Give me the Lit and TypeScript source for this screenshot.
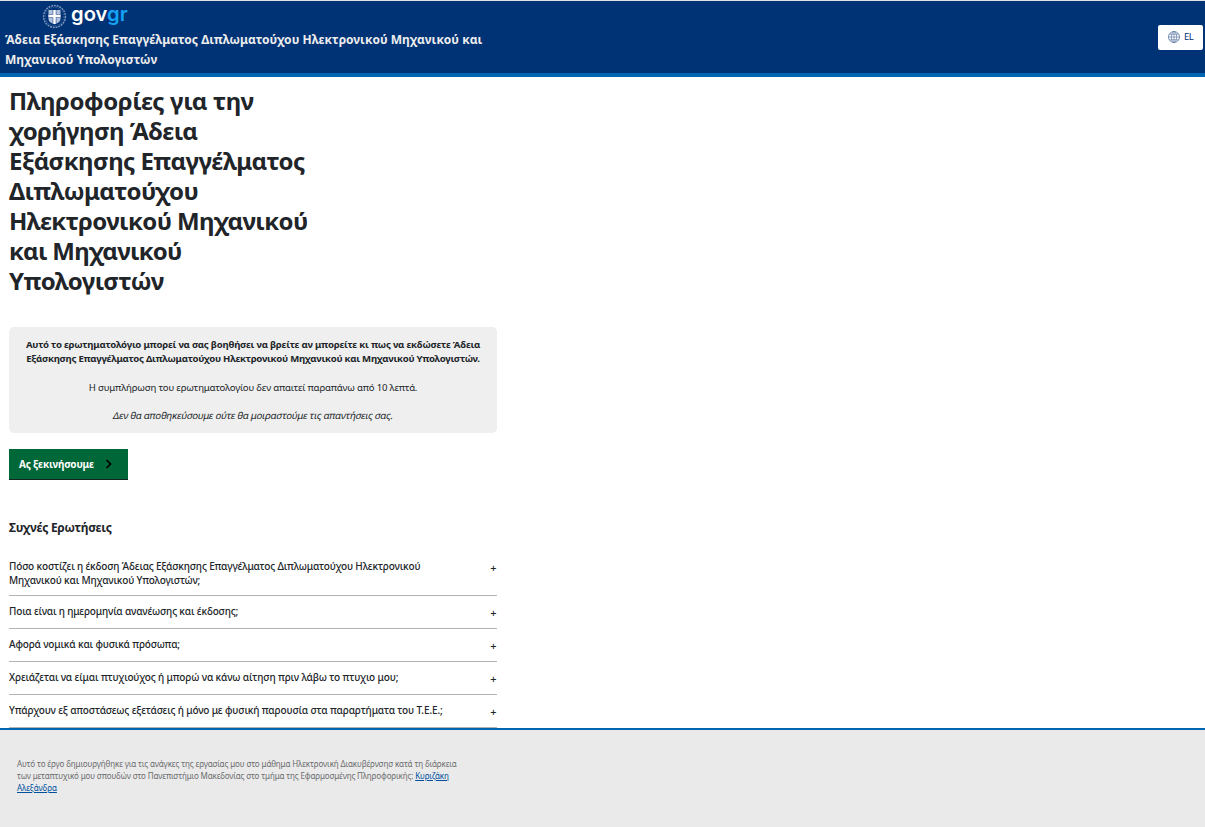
import { LitElement, html, css } from "lit";
import { customElement } from "lit/decorators.js";

// A line of copy with its tracking in px.
type Line = [text: string, tracking: number];

const SERVICE: Line[] = [
  ["Άδεια Εξάσκησης Επαγγέλματος Διπλωματούχου Ηλεκτρονικού Μηχανικού και", 0.02],
  ["Μηχανικού Υπολογιστών", 0.04],
];
const TITLE: Line[] = [
  ["Πληροφορίες για την", -0.42],
  ["χορήγηση Άδεια", -0.56],
  ["Εξάσκησης Επαγγέλματος", -0.56],
  ["Διπλωματούχου", -0.5],
  ["Ηλεκτρονικού Μηχανικού", -0.62],
  ["και Μηχανικού", -0.78],
  ["Υπολογιστών", -0.5],
];
const INTRO: Line[] = [
  ["Αυτό το ερωτηματολόγιο μπορεί να σας βοηθήσει να βρείτε αν μπορείτε κι πως να εκδώσετε Άδεια", -0.205],
  ["Εξάσκησης Επαγγέλματος Διπλωματούχου Ηλεκτρονικού Μηχανικού και Μηχανικού Υπολογιστών.", -0.255],
];
const FAQ: Line[][] = [
  [
    ["Πόσο κοστίζει η έκδοση Άδειας Εξάσκησης Επαγγέλματος Διπλωματούχου Ηλεκτρονικού", -0.153],
    ["Μηχανικού και Μηχανικού Υπολογιστών;", -0.15],
  ],
  [["Ποια είναι η ημερομηνία ανανέωσης και έκδοσης;", -0.155]],
  [["Αφορά νομικά και φυσικά πρόσωπα;", -0.15]],
  [["Χρειάζεται να είμαι πτυχιούχος ή μπορώ να κάνω αίτηση πριν λάβω το πτυχιο μου;", -0.12]],
  [["Υπάρχουν εξ αποστάσεως εξετάσεις ή μόνο με φυσική παρουσία στα παραρτήματα του Τ.Ε.Ε.;", -0.13]],
];

const lines = (items: Line[]) =>
  items.map(([text, tracking]) => html`<span class="line" style="letter-spacing:${tracking}px">${text}</span>`);

@customElement("app-root")
export class AppRoot extends LitElement {
  static styles = css`
    :host {
      display: flex;
      flex-direction: column;
      height: 827px;
      overflow: hidden;
      background: #fff;
      color: #212529;
      font-family: "Noto Sans", sans-serif;
    }
    .line { display: block; white-space: nowrap; }
    h1, h2, p { margin: 0; }
    header {
      box-sizing: border-box;
      flex: none;
      height: 77px;
      display: flex;
      justify-content: space-between;
      align-items: flex-start;
      padding: 0 2px 0 5px;
      background: #003375;
      border-top: 1px solid #dfe3e6;
      border-bottom: 4px solid #0065b3;
    }
    .logo { display: flex; align-items: center; height: 29px; padding-left: 37px; gap: 4px; }
    .logo svg { display: block; margin-top: 1px; }
    .word { font: 600 20.2px/24px Inter, sans-serif; color: #fff; margin-top: -3px; }
    .word b { font-weight: 600; color: #14a3f5; }
    .service { font-weight: 700; font-size: 12px; line-height: 20px; color: #ededed; }
    .lang {
      display: flex;
      align-items: center;
      box-sizing: border-box;
      width: 45px;
      height: 25px;
      margin-top: 24px;
      padding: 0 0 2px 10px;
      gap: 4px;
      border: 0;
      border-radius: 2px;
      background: #fff;
      color: #003375;
      font: 400 9.6px/12px "Noto Sans", sans-serif;
      letter-spacing: -0.6px;
    }
    .lang svg { margin-top: 1px; }
    main { box-sizing: border-box; flex: none; width: 497px; padding: 9px 0 0 9px; height: 651px; overflow: hidden; }
    h1 { font-size: 24px; line-height: 30px; font-weight: 700; }
    .intro {
      box-sizing: border-box;
      height: 106px;
      margin-top: 31px;
      padding-top: 11px;
      border-radius: 5px;
      background: #efefef;
      text-align: center;
      font-size: 9.6px;
      line-height: 14.2px;
    }
    .intro p + p { margin-top: 14.2px; }
    .plain { letter-spacing: -0.17px; }
    .slant { transform: skewX(-12deg); letter-spacing: -0.22px; }
    .start {
      display: flex;
      align-items: center;
      box-sizing: border-box;
      width: 119px;
      height: 31px;
      margin-top: 16px;
      padding: 0 16px 0 10px;
      justify-content: space-between;
      border: 0;
      border-bottom: 1px solid #12271d;
      background: #006838;
      color: #fff;
      font: 700 10px/14px "Noto Sans", sans-serif;
      letter-spacing: -0.2px;
    }
    h2 { margin-top: 38px; font-size: 12px; line-height: 20px; font-weight: 700; letter-spacing: -0.27px; }
    .faq { margin-top: 13px; }
    .item {
      display: flex;
      justify-content: space-between;
      padding: 8px 0 10px;
      border-bottom: 1px solid #b1b4b6;
      font-size: 10px;
      font-weight: 500;
      line-height: 14px;
    }
    .item:first-child { padding-bottom: 8px; }
    .plus { height: 14px; line-height: 17px; padding-right: 0.5px; font-size: 11px; }
    footer {
      flex: 1;
      padding: 28px 17px 0;
      border-top: 2px solid #0065b3;
      background: #eaeaea;
      color: #6a6c6e;
      font-size: 8px;
      line-height: 12px;
    }
    a { color: #0050a0; text-decoration: underline; }
  `;

  render() {
    return html`
      <header>
        <div>
          <div class="logo">
            <svg width="25" height="25" viewBox="0 0 25 25" fill="none">
              <circle cx="12.5" cy="12.5" r="10.9" stroke="#7f97bf" stroke-width="1.500" stroke-dasharray="1.900 .9" />
              <circle cx="12.500" cy="12.500" r="9.200" stroke="#5f7bab" stroke-width=".8" stroke-dasharray="1.200 1.400" />
              <path d="M6.500 6h12v9c0 2.600-2.400 4.200-6 5.200-3.600-1-6-2.600-6-5.200z" fill="#b4c4df" />
              <path d="M12.500 6v14M6.500 12h12" stroke="#4d6ea8" stroke-width="4" />
              <path d="M12.500 6v14M6.500 12h12" stroke="#fff" stroke-width="2.400" />
            </svg>
            <span class="word">gov<b>gr</b></span>
          </div>
          <div class="service">${lines(SERVICE)}</div>
        </div>
        <button class="lang">
          <svg width="12" height="12" viewBox="0 0 12 12" fill="none" stroke="#5674a3" stroke-width=".65">
            <circle cx="6" cy="6" r="5.500" stroke-width=".8" />
            <ellipse cx="6" cy="6" rx="2.600" ry="5.500" />
            <path d="M6 .5v11M.5 6h11M1.400 3.200h9.200M1.400 8.800h9.200" />
          </svg>
          EL
        </button>
      </header>
      <main>
        <h1>${lines(TITLE)}</h1>
        <section class="intro">
          <p><strong>${lines(INTRO)}</strong></p>
          <p class="plain">Η συμπλήρωση του ερωτηματολογίου δεν απαιτεί παραπάνω από 10 λεπτά.</p>
          <p class="slant">Δεν θα αποθηκεύσουμε ούτε θα μοιραστούμε τις απαντήσεις σας.</p>
        </section>
        <button class="start">
          Ας ξεκινήσουμε
          <svg width="7" height="10" viewBox="0 0 7 10" fill="none" stroke="#000" stroke-width="1.700">
            <path d="M1.500 1l4 4-4 4" />
          </svg>
        </button>
        <h2>Συχνές Ερωτήσεις</h2>
        <div class="faq">
          ${FAQ.map((q) => html`<div class="item"><div>${lines(q)}</div><span class="plus">+</span></div>`)}
        </div>
      </main>
      <footer>
        <span class="line" style="letter-spacing:-0.105px">Αυτό το έργο δημιουργήθηκε για τις ανάγκες της εργασίας μου στο μάθημα Ηλεκτρονική Διακυβέρνσησ κατά τη διάρκεια</span>
        <span class="line" style="letter-spacing:-0.13px">των μεταπτυχικό μου σπουδών στο Πανεπιστήμιο Μακεδονίας στο τμήμα της Εφαρμοσμένης Πληροφορικής: <a href="#">Κυριζάκη</a></span>
        <span class="line" style="letter-spacing:-0.05px"><a href="#">Αλεξάνδρα</a></span>
      </footer>
    `;
  }
}
